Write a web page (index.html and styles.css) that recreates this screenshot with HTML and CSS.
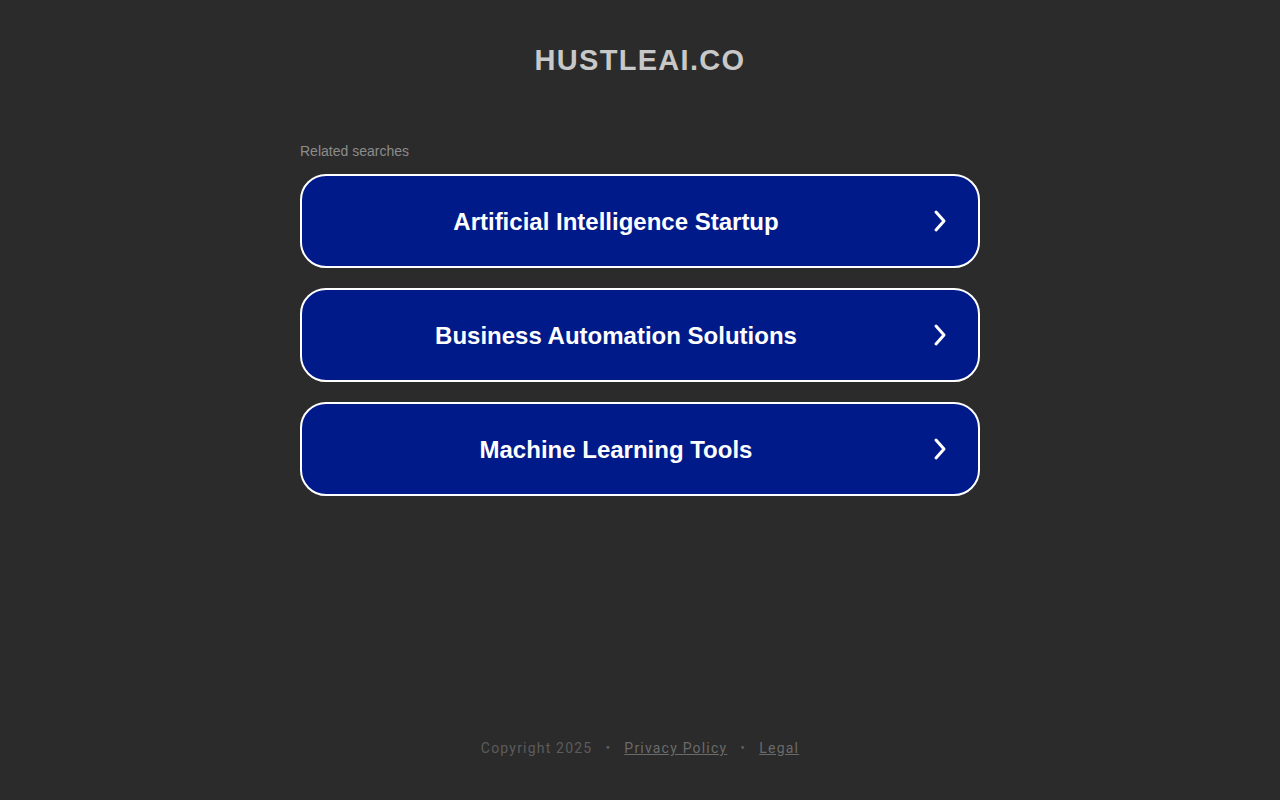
FILE: index.html
```html
<!DOCTYPE html>
<html>
<head>
<meta charset="utf-8">
<link rel="stylesheet" href="styles.css">
</head>
<body>
<div class="page">
  <header class="header">
    <h1 class="title">HUSTLEAI.CO</h1>
  </header>
  <main class="main">
    <div class="label">Related searches</div>
    <div class="list">
      <a class="item" href="#"><span class="item-text">Artificial Intelligence Startup</span><svg class="chev" width="16" height="24" viewBox="0 0 16 24"><path d="M4 3 L12 12 L4 21" fill="none" stroke="#fff" stroke-width="3" stroke-linecap="round" stroke-linejoin="round"/></svg></a>
      <a class="item" href="#"><span class="item-text">Business Automation Solutions</span><svg class="chev" width="16" height="24" viewBox="0 0 16 24"><path d="M4 3 L12 12 L4 21" fill="none" stroke="#fff" stroke-width="3" stroke-linecap="round" stroke-linejoin="round"/></svg></a>
      <a class="item" href="#"><span class="item-text">Machine Learning Tools</span><svg class="chev" width="16" height="24" viewBox="0 0 16 24"><path d="M4 3 L12 12 L4 21" fill="none" stroke="#fff" stroke-width="3" stroke-linecap="round" stroke-linejoin="round"/></svg></a>
    </div>
  </main>
  <footer class="footer">
    <span>Copyright 2025</span><span class="dot">•</span><a href="#">Privacy Policy</a><span class="dot">•</span><a href="#">Legal</a>
  </footer>
</div>
</body>
</html>
```
FILE: styles.css
```css
html, body {
  margin: 0;
  padding: 0;
  background: #2b2b2b;
}
body {
  font-family: "Liberation Sans", Arial, sans-serif;
}
.page {
  width: 1280px;
  height: 800px;
  display: flex;
  flex-direction: column;
  align-items: center;
}
.header {
  padding-top: 41px;
  height: 99px;
  box-sizing: border-box;
}
.title {
  margin: 0;
  font-size: 29px;
  line-height: 38px;
  font-weight: bold;
  color: #c8c8c8;
  letter-spacing: 1.3px;
}
.main {
  width: 680px;
}
.label {
  font-size: 14px;
  color: #8c8c8c;
  line-height: 16px;
  margin-top: 44px;
  margin-bottom: 15px;
}
.list {
  display: flex;
  flex-direction: column;
  gap: 20px;
}
.item {
  height: 94px;
  box-sizing: border-box;
  border: 2px solid #fff;
  border-radius: 26px;
  background: #011a8a;
  color: #fff;
  text-decoration: none;
  display: flex;
  align-items: center;
  position: relative;
  justify-content: center;
}
.item-text {
  font-size: 24px;
  font-weight: bold;
  margin-right: 48px;
  padding-top: 2px;
}
.chev {
  position: absolute;
  right: 30px;
  top: 33px;
}
.footer {
  margin-top: auto;
  margin-bottom: 42px;
  font-family: Roboto, sans-serif;
  font-size: 14px;
  letter-spacing: 1.2px;
  color: #5c5c5c;
  line-height: 20px;
}
.footer a {
  color: #6a6a6a;
  text-decoration: underline;
}
.dot {
  margin: 0 13px;
}
```
